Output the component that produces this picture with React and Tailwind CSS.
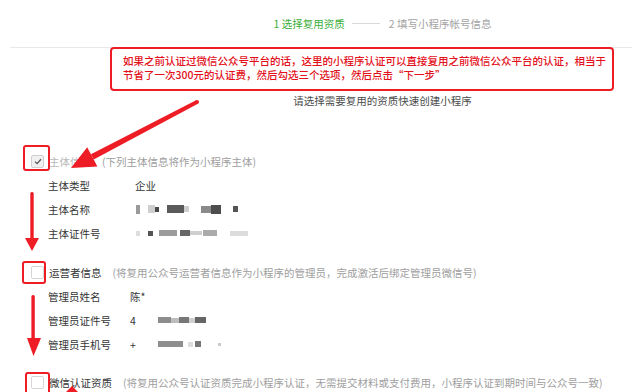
import React from "react"

const RED = "#ee1c25"

// mosaic blocks standing in for the blurred values: [width, color, gap before, height]
const entityName = [
    [4, "#9a9a9a", 0, 9], [7, "#cfcfcf", 8, 8], [4, "#4a4a4a", 0, 5], [17, "#5a5a5a", 8, 8], [5, "#cfcfcf", 0, 6],
    [10, "#8a8a8a", 12, 7], [10, "#4d4d4d", 0, 9], [5, "#555", 12, 6],
]
const entityId = [
    [4, "#dedede", 0, 5], [5, "#555", 8, 5], [18, "#9c9c9c", 6, 6], [10, "#666", 3, 6], [12, "#cfcfcf", 0, 4],
    [14, "#ababab", 1, 6], [18, "#dcdcdc", 13, 5],
]
const adminId = [
    [13, "#8c8c8c", 0, 6], [8, "#bdbdbd", 0, 5], [10, "#777", 0, 6], [6, "#cfcfcf", 0, 5], [11, "#666", 0, 6],
]
const adminPhone = [
    [25, "#8e8e8e", 0, 6], [5, "#dddddd", 5, 5], [6, "#777", 2, 6], [3, "#cccccc", 17, 3],
]

function Mosaic({ blocks, lead }) {
    return (
        <div className="flex items-center">
            {lead && <span>{lead}</span>}
            <div className={`flex items-center blur-[0.7px] ${lead ? "ml-[22px]" : ""}`}>
                {blocks.map(([w, c, g, h], i) => (
                    <div key={i} style={{ width: w, height: h, background: c, marginLeft: g }} />
                ))}
            </div>
        </div>
    )
}

function Checkbox({ checked }) {
    return (
        <div className={`w-[13px] h-[13px] rounded-[2px] border flex items-center justify-center ${checked ? "bg-[#f0f0f0] border-[#cfcfcf]" : "bg-white border-[#d6d6d6]"}`}>
            {checked && (
                <svg width="8" height="7" viewBox="0 0 8 7">
                    <path d="M1 3.6 L3.1 5.6 L7 1.3" fill="none" stroke="#555" strokeWidth="1.3" />
                </svg>
            )}
        </div>
    )
}

function OptionRow({ checked, title, titleColor, note, highlight }) {
    return (
        <div className="h-[24px] flex items-center pl-[31px]">
            <div className="relative">
                <Checkbox checked={checked} />
                <div className={`absolute border-2 rounded-[3px] border-[#ee1c25] ${highlight}`} />
            </div>
            <span className={`ml-[5px] ${titleColor}`}>{title}</span>
            <span className="ml-[11px] text-[#9e9e9e]">{note}</span>
        </div>
    )
}

function InfoRow({ label, labelWidth, children }) {
    return (
        <div className="h-[24px] flex items-center pl-[48px] text-[#353535]">
            <span className={labelWidth}>{label}</span>
            {children}
        </div>
    )
}

function Arrows() {
    return (
        <svg className="absolute inset-0 pointer-events-none" width="640" height="392" viewBox="0 0 640 392">
            {/* big diagonal arrow */}
            <polygon points="196.1,100.2 197.9,103.8 93.7,159.6 90.9,154.2" fill={RED} />
            <circle cx="197" cy="102" r="2" fill={RED} />
            <polygon points="71,168 87.2,147.2 97.4,166.6" fill={RED} />
            {/* down arrows */}
            <rect x="30.3" y="192" width="3.4" height="48" rx="1.5" fill={RED} />
            <polygon points="25,238 39,238 32,251" fill={RED} />
            <rect x="31.4" y="295" width="3.4" height="45" rx="1.5" fill={RED} />
            <polygon points="27,338 41,338 33.5,356" fill={RED} />
            {/* tip of the next arrow, cut off at the bottom */}
            <polygon points="66,392 72,386 78,392" fill={RED} />
        </svg>
    )
}

export default function App() {
    return (
        <div className="relative w-[640px] h-[392px] overflow-hidden bg-white font-['Noto_Sans_CJK_SC',sans-serif] text-[10.5px] leading-[13px]">
            <div className="h-[47px] flex items-center justify-center pl-[125px]">
                <span className="text-[#3cae3a]">1 选择复用资质</span>
                <div className="w-[28px] h-px bg-[#d9d9d9] ml-[7px] mr-[9px]" />
                <span className="text-[#a3a3a3]">2 填写小程序帐号信息</span>
            </div>

            <div className="relative">
                <div className="absolute top-0 left-[10px] right-[8px] h-px bg-[#e8e8e8]" />
                <div className="relative ml-[110px] w-[504px] h-[44px] border-2 border-[#ee1c25] rounded-[4px] pl-[11px] pt-[5px] leading-[14px] font-medium text-[#e3111b] whitespace-nowrap">
                    <div>如果之前认证过微信公众号平台的话，这里的小程序认证可以直接复用之前微信公众平台的认证，相当于</div>
                    <div>节省了一次300元的认证费，然后勾选三个选项，然后点击“下一步”</div>
                </div>
            </div>

            <div className="pl-[125px] text-center text-[#4a4a4a] mt-[3px]">请选择需要复用的资质快速创建小程序</div>

            <div className="mt-[42px]">
                <OptionRow
                    checked
                    title="主体信息"
                    titleColor="text-[#b8b8b8]"
                    note="(下列主体信息将作为小程序主体)"
                    highlight="left-[-8px] top-[-10px] w-[27px] h-[26px]"
                />
                <InfoRow label="主体类型" labelWidth="w-[87px]">企业</InfoRow>
                <InfoRow label="主体名称" labelWidth="w-[88px]"><Mosaic blocks={entityName} /></InfoRow>
                <InfoRow label="主体证件号" labelWidth="w-[88px]"><Mosaic blocks={entityId} /></InfoRow>
            </div>

            <div className="mt-[15px]">
                <OptionRow
                    title="运营者信息"
                    titleColor="text-[#353535]"
                    note="(将复用公众号运营者信息作为小程序的管理员，完成激活后绑定管理员微信号)"
                    highlight="left-[-9px] top-[-5px] w-[24px] h-[23px]"
                />
                <InfoRow label="管理员姓名" labelWidth="w-[82px]">陈*</InfoRow>
                <InfoRow label="管理员证件号" labelWidth="w-[82px]"><Mosaic lead="4" blocks={adminId} /></InfoRow>
                <InfoRow label="管理员手机号" labelWidth="w-[82px]"><Mosaic lead="+" blocks={adminPhone} /></InfoRow>
            </div>

            <div className="mt-[14px]">
                <OptionRow
                    title="微信认证资质"
                    titleColor="text-[#353535]"
                    note="(将复用公众号认证资质完成小程序认证，无需提交材料或支付费用，小程序认证到期时间与公众号一致)"
                    highlight="left-[-6px] top-[-4px] w-[25px] h-[24px]"
                />
            </div>

            <Arrows />
        </div>
    )
}
